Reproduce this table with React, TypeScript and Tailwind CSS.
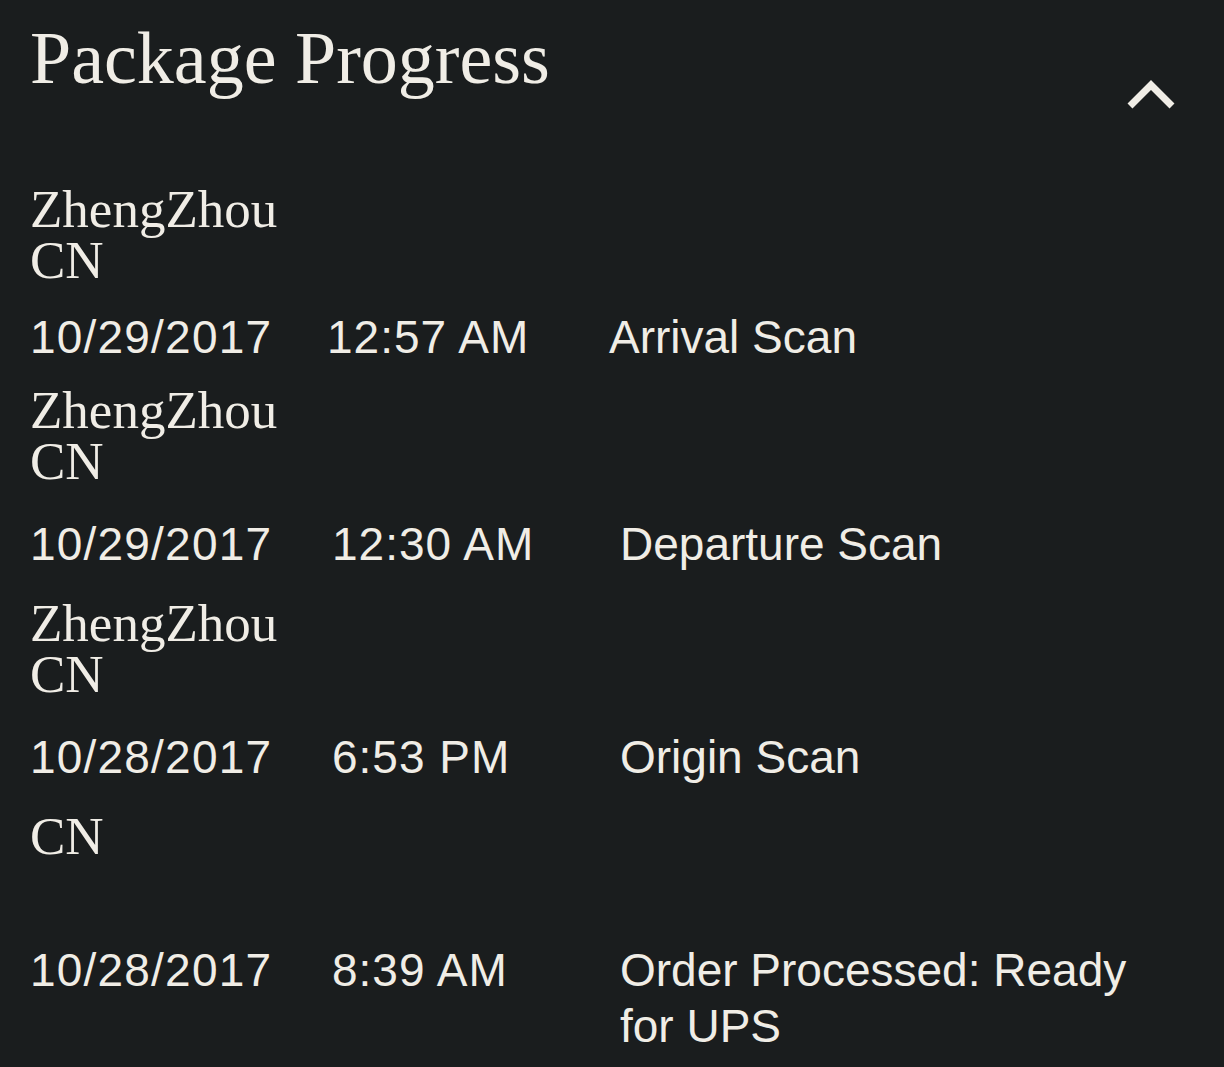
type ScanEvent = {
  location: string[];
  date: string;
  time: string;
  activity: string;
  gapClass: string;
  rowClass: string;
};

const events: ScanEvent[] = [
  {
    location: ["ZhengZhou", "CN"],
    date: "10/29/2017",
    time: "12:57 AM",
    activity: "Arrival Scan",
    gapClass: "",
    rowClass: "mt-[23px] grid-cols-[297px_282px_1fr]",
  },
  {
    location: ["ZhengZhou", "CN"],
    date: "10/29/2017",
    time: "12:30 AM",
    activity: "Departure Scan",
    gapClass: "mt-[20px]",
    rowClass: "mt-[29px] grid-cols-[302px_288px_1fr]",
  },
  {
    location: ["ZhengZhou", "CN"],
    date: "10/28/2017",
    time: "6:53 PM",
    activity: "Origin Scan",
    gapClass: "mt-[26px]",
    rowClass: "mt-[29px] grid-cols-[302px_288px_1fr]",
  },
  {
    location: ["CN", ""],
    date: "10/28/2017",
    time: "8:39 AM",
    activity: "Order Processed: Ready for UPS",
    gapClass: "mt-[26px]",
    rowClass: "mt-[29px] grid-cols-[302px_288px_1fr]",
  },
];

function ChevronUp() {
  return (
    <svg
      width="50"
      height="32"
      viewBox="0 0 50 32"
      fill="none"
      className="mt-[57px] shrink-0"
    >
      <polyline
        points="4,28 25,7 46,28"
        stroke="#f0ede6"
        strokeWidth="7"
        strokeLinecap="butt"
        strokeLinejoin="miter"
      />
    </svg>
  );
}

function EventItem({ event }: { event: ScanEvent }) {
  return (
    <div className={event.gapClass}>
      <div className="font-['Liberation_Serif',serif] text-[53px] leading-[51px]">
        {event.location.map((line, i) => (
          <div key={i} className="h-[51px]">
            {line}
          </div>
        ))}
      </div>
      <div
        className={`grid ${event.rowClass} font-['Liberation_Sans',Arial,sans-serif] text-[46px] leading-[56px]`}
      >
        <div className="tracking-[1.2px]">{event.date}</div>
        <div className="tracking-[1px]">{event.time}</div>
        <div className="max-w-[560px]">{event.activity}</div>
      </div>
    </div>
  );
}

export default function App() {
  return (
    <div className="min-h-screen bg-[#1a1d1e] text-[#f0ede6]">
      <header className="flex items-start justify-between pl-[30px] pr-[48px] pt-[21px]">
        <h1 className="font-['Liberation_Serif',serif] text-[74px] leading-[74px]">
          Package Progress
        </h1>
        <ChevronUp />
      </header>
      <div className="px-[30px] pt-[74px] pb-[12px]">
        {events.map((event, i) => (
          <EventItem key={i} event={event} />
        ))}
      </div>
    </div>
  );
}
